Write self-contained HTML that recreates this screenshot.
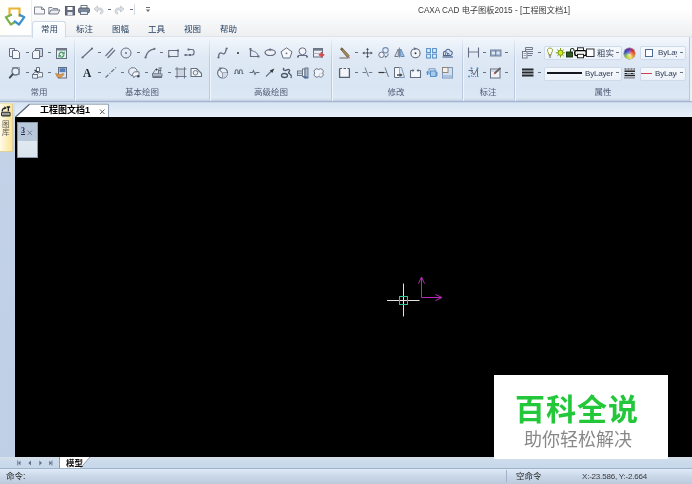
<!DOCTYPE html>
<html><head><meta charset="utf-8">
<style>
*{margin:0;padding:0;box-sizing:border-box}
html,body{width:692px;height:484px;overflow:hidden;background:#000}
body{position:relative;font-family:"Liberation Sans","Noto Sans CJK SC",sans-serif;font-size:8.5px;color:#1e395b}
.abs{position:absolute}
#title{left:0;top:0;width:692px;height:37px;background:linear-gradient(#ffffff 0,#ffffff 9px,#eeeff1 36px)}
#ribbon{left:0;top:36px;width:692px;height:66px;background:linear-gradient(#f3f7fc 0,#dfe9f5 20px,#d9e5f3 50px,#dde8f5 61px,#d3deec 62.5px,#c0cee0 64px);border-top:1px solid #dde4ee;border-bottom:1px solid #a3b5cc}
#rtab{left:32px;top:21px;width:34px;height:16.500px;background:linear-gradient(#fdfeff,#f3f7fc);border:1px solid #d0dae8;border-bottom:none;border-radius:3px 3px 0 0}
.t{position:absolute;white-space:nowrap;line-height:10px;will-change:transform}
.sep{position:absolute;top:39px;height:62px;width:2px;background:linear-gradient(90deg,#bccbdf 0,#bccbdf 1px,#eef4fb 1px);-webkit-mask-image:linear-gradient(rgba(0,0,0,.15),#000 35%);mask-image:linear-gradient(rgba(0,0,0,.15),#000 35%)}
.gl{position:absolute;top:87px;line-height:10px;color:#4f5d75;white-space:nowrap;transform:translateX(-50%);will-change:transform}
#docbar{left:0;top:102px;width:692px;height:15px;background:linear-gradient(#c6d4e6 0,#d9e5f4 1.5px,#e8f0f9 15px)}
#side{left:0;top:102px;width:15px;height:366px;background:linear-gradient(#d5e1f0 0,#c3d2e7 50px,#bfcfe5 100%)}
#canvas{left:15px;top:117px;width:677px;height:340px;background:#000}
#btab{left:0;top:457px;width:692px;height:11px;background:linear-gradient(#d6dfea,#cadaec 50%,#c6d8e9)}
#status{left:0;top:468px;width:692px;height:16px;background:linear-gradient(#deeaf8 0,#c9d6e7 8px,#c3d0e2 12px,#b7c7dc 16px);border-top:1px solid #a0b3c9}
svg{position:absolute;overflow:visible}
.combo{position:absolute;background:linear-gradient(#f5f9fd,#ecf2f9);border:1px solid #cfdbea;border-radius:2px}
.dd{position:absolute;width:3px;height:1px;background:#667186}
</style></head><body>
<div class="abs" id="title"></div>
<div class="abs" style="left:0;top:0;width:32px;height:36px;background:linear-gradient(90deg,#fffef7,#ffffff 40%);border-right:1px solid #eceef2;border-bottom:1px solid #e3e7ed"></div>
<div class="abs" id="ribbon"></div>
<div class="abs" id="rtab"></div>
<div class="abs" id="docbar"></div>
<div class="abs" id="side"></div>
<div class="abs" id="canvas"></div>
<div class="abs" id="btab"></div>
<div class="abs" id="status"></div>

<!-- title text -->
<div class="t" style="left:417.5px;top:6px;color:#3a3a3a;font-size:8.2px">CAXA CAD 电子图板2015 - [工程图文档1]</div>
<!-- ribbon tabs -->
<div class="t" style="left:40.500px;top:24px">常用</div>
<div class="t" style="left:76px;top:24px">标注</div>
<div class="t" style="left:112px;top:24px">图幅</div>
<div class="t" style="left:148px;top:24px">工具</div>
<div class="t" style="left:184px;top:24px">视图</div>
<div class="t" style="left:220px;top:24px">帮助</div>
<!-- ribbon right edge -->
<div class="abs" style="left:689px;top:37px;width:1px;height:64px;background:#b9c8dc"></div>
<div class="abs" style="left:690px;top:37px;width:2px;height:64px;background:#e9f0f8"></div>
<!-- group seps -->
<div class="sep" style="left:74px"></div>
<div class="sep" style="left:209px"></div>
<div class="sep" style="left:331px"></div>
<div class="sep" style="left:462px"></div>
<div class="sep" style="left:514px"></div>
<!-- group labels -->
<div class="gl" style="left:39px">常用</div>
<div class="gl" style="left:142px">基本绘图</div>
<div class="gl" style="left:271px">高级绘图</div>
<div class="gl" style="left:396px">修改</div>
<div class="gl" style="left:488px">标注</div>
<div class="gl" style="left:603px">属性</div>

<!-- doc tab -->
<svg style="left:14px;top:101px" width="100" height="16"><path d="M1.500 16L15.500 3.200H94.500V16Z" fill="#fff"/><path d="M15.500 3.200H94.500V16" fill="none" stroke="#93a1b6" stroke-width="1"/><path d="M1.500 16L15.500 3.200" fill="none" stroke="#566379" stroke-width="1.200"/></svg>
<div class="t" style="left:40px;top:104.500px;font-weight:bold;color:#000;font-size:9px">工程图文档1</div>
<svg style="left:99px;top:108px" width="7" height="7"><path d="M1 1.500L5.500 6M5.500 1.500L1 6" stroke="#5a5f68" stroke-width="1"/></svg>

<!-- side tab -->
<div class="abs" style="left:0;top:103px;width:12.500px;height:49px;background:linear-gradient(90deg,#fffbe8,#fbe495);border:1px solid #e0cf98;border-left:none;border-top-color:#ece2bb"></div>
<svg style="left:1px;top:106.300px" width="9.500" height="10.500" viewBox="0 0 11 11" preserveAspectRatio="none"><path d="M1.200 5.800C1.500 3.200 3 2.200 4.800 2" stroke="#1a1f28" stroke-width="1.400" fill="none"/><path d="M4 0.200L6.500 2L4 3.800Z" fill="#1a1f28"/><path d="M6.500 1H10.500M8.500 1V5.500" stroke="#1a1f28" stroke-width="1.500"/><rect x="0.700" y="6.500" width="9.800" height="3.800" rx="1" fill="#d8d4c0" stroke="#1a1f28" stroke-width="1.200"/><path d="M2 8.400H9" stroke="#555" stroke-width="1"/></svg>
<div class="t" style="left:2.300px;top:121.300px;font-size:7.500px;line-height:7.700px;color:#5a5a5a;width:8px;white-space:normal">图库</div>

<!-- float widget -->
<div class="abs" style="left:16.500px;top:122px;width:21px;height:35.500px;background:linear-gradient(#b9c7da 0,#b9c7da 17.500px,#e0e8f1 17.500px,#dbe4ee 35px);border:1px solid #8b98aa"></div>
<div class="t" style="left:20.500px;top:127px;font-size:8px;color:#1c2a48;font-family:'Liberation Serif',serif;font-weight:bold;border-bottom:1px solid #1c2a48;line-height:7px">3</div>
<svg style="left:27px;top:129.500px" width="6" height="6"><path d="M0.500 0.500L5 5M5 0.500L0.500 5" stroke="#6a7890" stroke-width=".9"/></svg>

<!-- crosshair -->
<svg style="left:380px;top:270px" width="70" height="50">
<path d="M7 30.500H39.500M23.500 13.500V46.500" stroke="#e4e4e4" stroke-width="1" fill="none"/>
<rect x="19.500" y="26.500" width="8" height="8" fill="none" stroke="#2fc890" stroke-width="1"/>
<path d="M41.500 27.500V7.500M41.500 27.500H61.500M38.500 13.500L41.500 7L44.500 13.500M55.500 24.500L62 27.500L55.500 30.500" stroke="#b828b8" stroke-width="1" fill="none"/>
</svg>

<!-- watermark -->
<div class="abs" style="left:494px;top:375px;width:174px;height:84px;background:#fff"></div>
<div class="t" style="left:515px;top:391.500px;font-size:30px;line-height:36px;font-weight:bold;color:#22c73a;letter-spacing:1px">百科全说</div>
<div class="t" style="left:524px;top:428px;font-size:18px;line-height:24px;color:#888">助你轻松解决</div>

<!-- bottom tabs -->
<svg style="left:56px;top:457px" width="40" height="11"><path d="M3.500 0H34L24.500 11H3.500Z" fill="#fff"/><path d="M34 0L24.500 11M3.500 0V11" stroke="#8793a6" stroke-width=".9" fill="none"/></svg>
<svg style="left:15px;top:459px" width="40" height="8"><g fill="#62718b"><path d="M2.300 1.500H3.200V6.500H2.300ZM5.500 1.500V6.500L3.200 4Z"/><path d="M16 1.500V6.500L13.300 4Z"/><path d="M24.300 1.500V6.500L27 4Z"/><path d="M34.200 1.500V6.500L36.500 4ZM36.500 1.500H37.400V6.500H36.500Z"/></g></svg>
<div class="t" style="left:65.500px;top:458px;font-weight:bold;color:#111;font-size:8.500px">模型</div>

<!-- status -->
<div class="t" style="left:6px;top:471px;color:#222">命令:</div>
<div class="abs" style="left:506px;top:470px;width:1px;height:12px;background:#9fb0c8"></div>
<div class="t" style="left:516px;top:471px;color:#222">空命令</div>
<div class="t" style="left:582px;top:472px;color:#3a3a3a;font-size:8px;letter-spacing:-0.2px">X:-23.586, Y:-2.664</div>
<svg style="left:0px;top:0px" width="32" height="36">
<path d="M9.5 16V8.5H19.5V17" stroke="#e9b535" stroke-width="2.2" fill="none"/>
<path d="M12 14.500L5.800 17.200L10.800 24.500L15.500 21.800" stroke="#7bb04a" stroke-width="2.2" fill="none" stroke-linejoin="round"/>
<path d="M19 14.500L24.300 17.200L19 24.500L14 20.800" stroke="#3d8fd0" stroke-width="2.2" fill="none" stroke-linejoin="round"/>
<path d="M14.5 13L11 17.5H13.5V20H15.5V17.5H18Z" fill="#fff" opacity=".9"/>
</svg>
<svg style="left:34px;top:6px;opacity:0.85" width="12" height="9"><path d="M0.500 1H7.500L10.500 3.500V8H0.500Z" fill="#f4f6f9" stroke="#5a6476" stroke-width=".9"/><path d="M7.500 1V3.500H10.500" stroke="#5a6476" stroke-width=".9" fill="none"/></svg>
<svg style="left:48px;top:6px;opacity:0.85" width="13" height="9"><path d="M0.800 8V1.500H4L5 2.500H9.500V4" stroke="#5a6476" stroke-width=".9" fill="#eef0f3"/><path d="M0.800 8L3 4H12L9.800 8Z" fill="#e9eaec" stroke="#4a5468" stroke-width=".9"/></svg>
<svg style="left:64.5px;top:5.5px;opacity:0.85" width="11" height="10"><rect x="0.5" y="0.5" width="9" height="8.500" fill="#4a5568" stroke="#2f3745" stroke-width=".9"/><rect x="2.5" y="1" width="5" height="3" fill="#fff"/><rect x="2.5" y="6" width="5" height="3" fill="#dfe5ee"/></svg>
<svg style="left:78px;top:5px;opacity:0.85" width="13" height="10"><rect x="3" y="0.500" width="6" height="3" fill="#fff" stroke="#4a5468" stroke-width=".9"/><rect x="0.500" y="3" width="11" height="4.800" rx="1.500" fill="#66758c" stroke="#2f3745" stroke-width=".9"/><rect x="2.500" y="6.300" width="7" height="3.200" fill="#dcebf6" stroke="#4a5468" stroke-width=".9"/></svg>
<svg style="left:93px;top:5px;opacity:0.85" width="12" height="10"><path d="M1 4L4.5 1V3H7C9 3 10 4.5 10 6.5C10 8 9 9 7.5 9V7.2C8.2 7 8.5 6.7 8.5 6C8.5 5.4 8 5 7 5H4.5V7Z" fill="#d9dde3" stroke="#b3b9c3" stroke-width=".8"/></svg>
<div class="dd" style="left:108px;top:9px"></div>
<svg style="left:114px;top:5px;opacity:0.85" width="12" height="10"><path d="M10 4L6.5 1V3H4C2 3 1 4.5 1 6.5C1 8 2 9 3.5 9V7.2C2.8 7 2.5 6.7 2.5 6C2.5 5.4 3 5 4 5H6.5V7Z" fill="#d9dde3" stroke="#b3b9c3" stroke-width=".8"/></svg>
<div class="dd" style="left:130px;top:9px"></div>
<div class="abs" style="left:134px;top:4px;width:1px;height:11px;background:#d5dbe4"></div>
<svg style="left:145px;top:6px;opacity:0.85" width="6" height="8"><path d="M1 1.5H5" stroke="#555" stroke-width="1"/><path d="M0.8 3.5H5.2L3 6Z" fill="#555"/></svg>
<svg style="left:9px;top:48px;opacity:0.82" width="12" height="11"><path d="M0.5 0.5H5.5V8.5H0.5Z" fill="#f4f6fa" stroke="#4a5468"  stroke-width="1"/><path d="M3.5 2.5H8.5L10.5 4.5V10.5H3.5Z" fill="#fbfcfe" stroke="#4a5468"/></svg>
<div class="dd" style="left:26px;top:52px"></div>
<svg style="left:32px;top:48px;opacity:0.82" width="12" height="11"><path d="M3.5 0.5H10.5V8.5H3.5Z" fill="#c9d0db" stroke="#4a5468"/><path d="M0.5 4.5L2.5 2.5H7.5V10.5H0.5Z" fill="#f4f6fa" stroke="#4a5468"/></svg>
<div class="dd" style="left:48px;top:52px"></div>
<svg style="left:56px;top:48px;opacity:0.82" width="12" height="11"><rect x="0.5" y="0.5" width="10" height="10" fill="#e9f3ea" stroke="#4a5468"/><rect x="0.5" y="0.5" width="10" height="2" fill="#5a6374"/><path d="M3.300 6.800A2.300 2.300 0 0 1 7.200 4.800" stroke="#2a8a48" stroke-width="1.300" fill="none"/><path d="M8.700 3.300V6.300H5.700Z" fill="#2a8a48"/><path d="M7.800 6.500A2.300 2.300 0 0 1 3.900 8.400" stroke="#2a8a48" stroke-width="1.300" fill="none"/><path d="M2.400 9.900V6.900H5.400Z" fill="#2a8a48"/></svg>
<svg style="left:9px;top:67px;opacity:0.82" width="12" height="12"><rect x="3.5" y="0.5" width="7" height="7" fill="none" stroke="#8a94a6"/><circle cx="6.5" cy="4.5" r="3.6" fill="#eef3f9" fill-opacity=".7" stroke="#4a5468" stroke-width="1.1"/><path d="M3.8 7.2L0.8 10.6" stroke="#222b38" stroke-width="2" stroke-linecap="round"/></svg>
<div class="dd" style="left:26px;top:72px"></div>
<svg style="left:32px;top:67px;opacity:0.82" width="12" height="12"><path d="M4.5 0.5H7.5V4.5H4.5Z" fill="#fff" stroke="#4a5468"/><path d="M0.500 7.5L3 5H8L5.5 7.5Z M0.5 7.5H5.5V11.200H0.5Z M5.500 7.5L8 5V9L5.500 11.200" fill="#f2f5f9" stroke="#4a5468" stroke-width=".9"/><path d="M6.5 5.500H10.500V10H7" fill="#f6f8fb" stroke="#4a5468" stroke-width=".9"/><path d="M2.500 3L6 5.500" stroke="#111" stroke-width="1.300"/></svg>
<div class="dd" style="left:48px;top:72px"></div>
<svg style="left:55px;top:67px;opacity:0.82" width="13" height="12"><rect x="3.5" y="0.5" width="8" height="10.500" fill="#dfe8f4" stroke="#4a5468"/><rect x="4.5" y="1.200" width="6" height="4" fill="#3568b0"/><path d="M0.5 6.500C2 6.500 3.500 7.500 5 7.500L8.500 6.500L9 7.500L6 10.500L2.500 10.500Z" fill="#d98a2b" stroke="#9a5a18" stroke-width=".6"/></svg>
<svg style="left:81px;top:47px;opacity:0.82" width="13" height="12"><path d="M1.500 10.500L11 1.500" stroke="#4a5468" stroke-width="1.200"/><circle cx="1.500" cy="10.500" r="1.100" fill="#4a5468"/><circle cx="11" cy="1.500" r="1.100" fill="#4a5468"/></svg>
<div class="dd" style="left:98px;top:52px"></div>
<svg style="left:105px;top:47px;opacity:0.82" width="11" height="12"><path d="M0.500 9L8 1M2.500 11L10 3" stroke="#4a5468" stroke-width="1.100"/></svg>
<svg style="left:120px;top:47px;opacity:0.82" width="12" height="12"><circle cx="6" cy="6" r="5" stroke="#4a5468" fill="none" stroke-width="1"/><circle cx="6" cy="6" r="1" fill="#4a5468"/></svg>
<div class="dd" style="left:137px;top:52px"></div>
<svg style="left:144px;top:47px;opacity:0.82" width="12" height="12"><path d="M1.500 10.500C2.500 6 5.500 2.500 10.500 1.800" stroke="#4a5468" stroke-width="1.200" fill="none"/><circle cx="1.500" cy="10.500" r="1.100" fill="#4a5468"/><circle cx="10.500" cy="1.800" r="1.100" fill="#4a5468"/></svg>
<div class="dd" style="left:160px;top:52px"></div>
<svg style="left:168px;top:49px;opacity:0.82" width="12" height="9"><rect x="0.700" y="1.500" width="9.300" height="6" fill="#e9eef6" stroke="#4a5468"  stroke-width="1"/><rect x="9" y="0.500" width="2" height="2" fill="#4a5468"/><rect x="0" y="6.500" width="2" height="2" fill="#4a5468"/></svg>
<svg style="left:184px;top:48px;opacity:0.82" width="12" height="9"><path d="M4.500 1.500H8C10.800 1.500 10.800 7 8 7H1.500" stroke="#4a5468" stroke-width="1.200" fill="none"/><rect x="3.500" y="0.500" width="2" height="2" fill="#4a5468"/><rect x="0.500" y="6" width="2" height="2" fill="#4a5468"/><rect x="5" y="6" width="2" height="2" fill="#4a5468"/></svg>
<div class="t" style="left:83.300px;top:66px;font-family:'Liberation Serif',serif;font-weight:bold;font-size:11.500px;line-height:14px;color:#1c222c">A</div>
<div class="dd" style="left:98px;top:72px"></div>
<svg style="left:105px;top:67px;opacity:0.82" width="12" height="12"><path d="M0.500 10.500L11 0.500" stroke="#4a5468" stroke-width="1.100" stroke-dasharray="4 1.500 1 1.500"/></svg>
<div class="dd" style="left:121px;top:72px"></div>
<svg style="left:128px;top:67px;opacity:0.82" width="12" height="12"><path d="M3 0.800H6.800L9 3V5.500H6L4 9L0.800 6.200V3Z" fill="#eef1f6" stroke="#4a5468" stroke-width=".9"/><path d="M4.300 7.300L6.500 4.800H11V9H7.200L5.800 10.800Z" fill="#f6f8fb" stroke="#4a5468" stroke-width=".9"/><circle cx="10.300" cy="9.300" r="1.200" fill="#1c222c"/></svg>
<div class="dd" style="left:145px;top:72px"></div>
<svg style="left:152px;top:67px;opacity:0.82" width="11" height="12"><path d="M0.500 7L3.500 2.500H6.500V7Z" fill="#dfe4ec" stroke="#4a5468" stroke-width=".9"/><path d="M3.500 2.500L5 1L5 4Z" fill="#111"/><path d="M6.500 1H10M8.200 1V7M7 3.500H9.500" stroke="#4a5468" stroke-width="1"/><rect x="0.500" y="7" width="9.500" height="2" fill="#f2f4f8" stroke="#4a5468" stroke-width=".9"/><rect x="0.500" y="9.200" width="9.500" height="1.800" fill="#4b5567"/></svg>
<div class="dd" style="left:168px;top:72px"></div>
<svg style="left:175px;top:67px;opacity:0.82" width="11" height="12"><rect x="2" y="2" width="7.500" height="7.500" fill="#cdd2db"/><path d="M0 2H11.500M0 9.500H11.500M2 0V11.500M9.500 0V11.500" stroke="#4a5468" stroke-width=".9"/></svg>
<svg style="left:190px;top:67px;opacity:0.82" width="13" height="11"><path d="M1 1.500H6.500L11.500 6.500V9.500H1Z" fill="#fbfcfe" stroke="#4a5468" stroke-width="1.100" stroke-linejoin="round"/><circle cx="5.500" cy="5.800" r="2.300" fill="#eef2f7" stroke="#4a5468" stroke-width=".9"/></svg>
<svg style="left:217px;top:47px;opacity:0.82" width="12" height="12"><path d="M1.500 10.500C1.500 5 4 5.500 5.500 6.500C8 8 8.500 5 9.500 1.500" stroke="#4a5468" stroke-width="1.300" fill="none"/><circle cx="1.500" cy="10.500" r="1.100" fill="#4a5468"/><circle cx="9.700" cy="1.500" r="1.100" fill="#4a5468"/></svg>
<div class="abs" style="left:236.500px;top:51.500px;width:2.500px;height:2.500px;border-radius:50%;background:#222b38"></div>
<svg style="left:249px;top:48px;opacity:0.82" width="11" height="10"><path d="M1.500 0.500V8.500H10" stroke="#4a5468" stroke-width="1.200" fill="none"/><path d="M1.500 2.500C6 3 8.800 5 9.200 8.500" stroke="#4a5468" stroke-width="1" fill="none"/><rect x="0.500" y="0" width="2" height="2" fill="#4a5468"/><rect x="8.500" y="7.500" width="2" height="2" fill="#4a5468"/></svg>
<svg style="left:264px;top:48px;opacity:0.82" width="13" height="9"><ellipse cx="6.200" cy="4.600" rx="5.200" ry="2.900" fill="#f2f5fa" stroke="#4a5468" stroke-width="1.200"/><rect x="5.200" y="0.600" width="2" height="2" fill="#4a5468"/></svg>
<svg style="left:280px;top:47px;opacity:0.82" width="13" height="12"><path d="M6.500 0.800L12 4.800L9.900 11H3.100L1 4.800Z" fill="#fbfcfe" stroke="#4a5468" stroke-width="1" stroke-linejoin="round"/><circle cx="6.500" cy="6.300" r=".9" fill="#4a5468"/></svg>
<svg style="left:297px;top:47px;opacity:0.82" width="12" height="12"><circle cx="5.500" cy="4.300" r="3.500" fill="#f4f7fb" stroke="#4a5468" stroke-width="1"/><path d="M1 11V8.500H10V11" stroke="#4a5468" stroke-width="1" fill="none"/><path d="M0 9.500H2M9 9.500H11" stroke="#4a5468" stroke-width="1.200"/></svg>
<svg style="left:313px;top:48px;opacity:0.82" width="12" height="10"><rect x="0.500" y="0.500" width="9" height="8.500" fill="#eef1f6" stroke="#4a5468"/><rect x="0.500" y="0.500" width="9" height="2.200" fill="#5a6374"/><path d="M0.500 5.500H9.500" stroke="#8a94a6" stroke-width=".8"/><path d="M8.500 4V9.500M5.800 6.800H11.200" stroke="#e02020" stroke-width="1.800"/></svg>
<svg style="left:217px;top:67px;opacity:0.82" width="12" height="12"><circle cx="5.600" cy="6" r="5" fill="#eef2f7" stroke="#4a5468" stroke-width="1.100"/><path d="M5.600 6V11M5.600 6H10.600M5.600 6L2 2.500" stroke="#4a5468" stroke-width="1"/><path d="M5.600 6H10.600A5 5 0 0 1 5.600 11Z" fill="#cfd6e1"/><path d="M2.200 0.300L5.500 1L3 3.300Z" fill="#4a5468"/></svg>
<svg style="left:234px;top:69px;opacity:0.82" width="10" height="6"><path d="M0 4.500H1.200V2.500C1.200 0.200 4 0.200 4 2.500V4.500H5.400V2.500C5.400 0.200 8.200 0.200 8.200 2.500V4.500H9.400" stroke="#4a5468" stroke-width="1.100" fill="none"/></svg>
<svg style="left:249px;top:68px;opacity:0.82" width="11" height="9"><path d="M0.500 4.500H3.500L4.500 2.500L6 6.500L7 4.500H10.500" stroke="#4a5468" stroke-width="1.100" fill="none"/></svg>
<svg style="left:265px;top:68px;opacity:0.82" width="10" height="10"><path d="M1 8.500L7 2.500" stroke="#4a5468" stroke-width="1.100"/><path d="M9.300 0.500L4.800 2.600L7.300 5Z" fill="#111"/></svg>
<svg style="left:281px;top:67px;opacity:0.82" width="12" height="12"><path d="M3 1C1 3 4 4 5.500 3.200C8 1.500 9.500 3 8 4.800C6.500 6.500 10 6.500 10.500 9.500" stroke="#2f3948" stroke-width="1.400" fill="none"/><ellipse cx="3.500" cy="8.500" rx="3" ry="2" fill="none" stroke="#2f3948" stroke-width="1.300"/><path d="M8.800 10.500L11 9L10.800 11.200Z" fill="#4a5468"/></svg>
<svg style="left:297px;top:68px;opacity:0.82" width="12" height="11"><rect x="0.500" y="3" width="5" height="4.500" fill="#d6dde8" stroke="#4a5468" stroke-width=".9"/><path d="M0.500 5.200H5.500" stroke="#4a5468" stroke-width=".8"/><rect x="5.500" y="1" width="2.500" height="7.500" fill="#f2f5f9" stroke="#4a5468" stroke-width=".9"/><rect x="8" y="0" width="3" height="10" fill="#9fb4cf" stroke="#4a5468" stroke-width=".9"/><path d="M5.500 8.500H10.500V10.200H7Z" fill="#2d4f86"/></svg>
<svg style="left:312.8px;top:67.5px;opacity:0.82" width="12" height="11"><path d="M5.700 1.530A2.700 2.600 0 0 1 9.700 5A2.700 2.600 0 0 1 5.700 8.470A2.700 2.600 0 0 1 1.700 5A2.700 2.600 0 0 1 5.700 1.530Z" fill="#f6f8fb" stroke="#4a5468" stroke-width=".9"/><circle cx="7.800" cy="7" r="1.600" fill="#fff" stroke="#9aa4b4" stroke-width=".5"/></svg>
<svg style="left:339px;top:47px;opacity:0.82" width="12" height="12"><path d="M1.500 2L3 0.800L10 8.500L9.500 10.200L7.800 9.800Z" fill="#96733a" stroke="#5a4420" stroke-width=".9"/><path d="M1.500 2L3 0.800L4.300 2.200L2.800 3.500Z" fill="#5b4a2a"/><path d="M0.500 11H9" stroke="#5a4a3a" stroke-width="1"/><path d="M8.500 10.800H11" stroke="#c05050" stroke-width="1"/></svg>
<div class="dd" style="left:355px;top:52px"></div>
<svg style="left:361px;top:47px;opacity:0.82" width="13" height="12"><path d="M6.500 2V10M2.500 6H10.500" stroke="#4a5468" stroke-width="1"/><path d="M6.500 0.800L8 3H5ZM6.500 11.200L8 9H5ZM1.200 6L3.500 4.500V7.500ZM11.800 6L9.500 4.500V7.500Z" fill="#2a3342"/><circle cx="6.500" cy="6" r="1" fill="#2a3342"/></svg>
<svg style="left:378px;top:47px;opacity:0.82" width="12" height="12"><circle cx="3.500" cy="7.800" r="2.700" fill="#f4f7fb" stroke="#4a5468" stroke-width="1"/><circle cx="7.500" cy="3.300" r="2.700" fill="none" stroke="#5878a4" stroke-width="1.100"/><path d="M10 6.500C10.500 8.500 9.500 9.500 7.500 9.800" stroke="#4a5468" stroke-width="1" fill="none"/><path d="M6.800 8.500L8.800 9.800L7 11Z" fill="#4a5468"/></svg>
<svg style="left:394px;top:47px;opacity:0.82" width="12" height="11"><path d="M4.300 2V9.500H0.800Z" fill="#e8ecf2" stroke="#4a5468" stroke-width=".9"/><path d="M6.700 2V9.500H10.200Z" fill="#8fc0e8" stroke="#3a6ea8" stroke-width=".9"/><path d="M5.500 0.500V10.500" stroke="#4a5468" stroke-width=".8"/></svg>
<svg style="left:410px;top:47px;opacity:0.82" width="12" height="12"><circle cx="5.500" cy="6.200" r="4.600" fill="#f6f8fb" stroke="#4a5468" stroke-width="1.100"/><circle cx="5.500" cy="6.200" r="1" fill="#111"/><path d="M3.800 0.200L6.800 1.500L4.300 3.300Z" fill="#4a5468"/></svg>
<svg style="left:426px;top:48px;opacity:0.82" width="12" height="11"><g fill="#eaf3fb" stroke="#3a7fc0" stroke-width="1.100"><rect x="0.600" y="0.600" width="3.800" height="3.800"/><rect x="6.600" y="0.600" width="3.800" height="3.800"/><rect x="0.600" y="6.200" width="3.800" height="3.800"/><rect x="6.600" y="6.200" width="3.800" height="3.800"/></g></svg>
<svg style="left:442px;top:48px;opacity:0.82" width="12" height="10"><path d="M1.500 7.500V5C1.500 3.500 3 3 3.800 3.500C4 0.800 7.500 0.500 8.200 3C10 3 10.800 4.500 10 6C9.500 7 9 7.500 8.500 7.500Z" fill="#dbe8f6" stroke="#2d4a78" stroke-width="1.100"/><path d="M3.500 7.500V4.800H5.500V7.500M5.500 5.500H7V7.500" stroke="#2d4a78" stroke-width=".8" fill="none"/><path d="M0.500 9H11" stroke="#2d4a78" stroke-width="1.200"/></svg>
<svg style="left:339px;top:67px;opacity:0.82" width="12" height="12"><path d="M0.600 1.500V10.400H10.400V1.500" fill="#f8fafc" stroke="#3a4456" stroke-width="1.300"/><path d="M0.500 1.500H10.500" stroke="#3a4456" stroke-width="1.200" stroke-dasharray="2.500 1.500"/></svg>
<div class="dd" style="left:355px;top:72px"></div>
<svg style="left:362px;top:67px;opacity:0.82" width="12" height="11"><path d="M0.500 5.500H5M6.800 5.500H11" stroke="#4a5468" stroke-width=".9" stroke-dasharray="3.500 1"/><path d="M3 0.500L6.500 9.500" stroke="#4a5468" stroke-width=".9"/></svg>
<svg style="left:378px;top:67px;opacity:0.82" width="12" height="11"><path d="M0.500 5.500H6" stroke="#111" stroke-width="1.200"/><path d="M6 5.500H8.500" stroke="#4a5468" stroke-width=".8"/><path d="M7 0.500L10.500 10" stroke="#4a5468" stroke-width=".9"/></svg>
<svg style="left:394px;top:67px;opacity:0.82" width="12" height="12"><path d="M0.500 0.500H5.500V10.500H0.500Z" fill="#fbfcfe" stroke="#4a5468" stroke-width="1"/><path d="M5.500 0.500H7.500L10.500 10.500H5.500" fill="#dfeaf6" stroke="#5a7ea8" stroke-width=".9"/><path d="M3 8H7" stroke="#111" stroke-width="1.300"/><path d="M8.500 8L6.300 6.300V9.700Z" fill="#111"/></svg>
<svg style="left:410px;top:68px;opacity:0.82" width="12" height="10"><path d="M0.500 2.500V9.500H10.500V2.500" fill="#fbfcfe" stroke="#4a5468" stroke-width="1.100"/><path d="M0.500 2.500H3M8 2.500H10.500" stroke="#4a5468" stroke-width="1.100"/><path d="M2.500 0.800L4.500 2.500L2.500 4.200ZM8.500 0.800L6.500 2.500L8.500 4.200Z" fill="#4a5468"/></svg>
<svg style="left:426px;top:68px;opacity:0.82" width="12" height="10"><rect x="3" y="0.800" width="6" height="5" fill="none" stroke="#5a7ea8" stroke-width=".9"/><rect x="4.500" y="3" width="5.500" height="5.500" fill="#9cc4ea" stroke="#3a7fc0" stroke-width="1"/><path d="M1.500 3V7M10.800 4V8" stroke="#3a7fc0" stroke-width="1.300"/><path d="M0.500 4.500L2.500 4.500" stroke="#3a7fc0" stroke-width="1"/></svg>
<svg style="left:442px;top:67px;opacity:0.82" width="12" height="12"><rect x="0.500" y="0.500" width="10" height="10.500" fill="#cfe0f1" stroke="#6b88ad" stroke-width="1"/><rect x="0.500" y="0.500" width="5.500" height="5" fill="#fbf3ea" stroke="#7a6a5a" stroke-width=".9"/><path d="M0.500 9H10.500" stroke="#8fb0d4" stroke-width="1.500"/></svg>
<svg style="left:468px;top:47px;opacity:0.82" width="12" height="12"><path d="M0.500 0.500V10.500M10.500 0.500V10.500" stroke="#4a5468" stroke-width="1.100"/><path d="M0.500 5H10.500" stroke="#4a5468" stroke-width=".9"/></svg>
<div class="dd" style="left:483px;top:52px"></div>
<svg style="left:490px;top:49px;opacity:0.82" width="12" height="8"><rect x="0.500" y="1" width="10.500" height="6" fill="#8ea3c0" stroke="#5a6f90" stroke-width="1"/><rect x="2" y="2.800" width="3" height="2.500" fill="#dfe8f4"/><rect x="6.500" y="2.800" width="3" height="2.500" fill="#dfe8f4"/><path d="M5.700 1V7" stroke="#4a5a78" stroke-width=".8"/></svg>
<div class="dd" style="left:505px;top:52px"></div>
<svg style="left:468px;top:67px;opacity:0.82" width="12" height="12"><path d="M3.500 1V9.500H10.500" stroke="#3a7fc0" stroke-width="1.200" stroke-dasharray="1.200 1.200" fill="none"/><path d="M0.500 3.500H5M3.500 3.500L6 8L9.500 1.500V9.500" stroke="#4a5468" stroke-width="1" fill="none"/><circle cx="3.500" cy="1.200" r="1" fill="#3a7fc0"/><circle cx="9.500" cy="1.200" r="1" fill="#3a7fc0"/><circle cx="1" cy="9.500" r="1" fill="#3a7fc0"/></svg>
<div class="dd" style="left:483px;top:72px"></div>
<svg style="left:490px;top:67px;opacity:0.82" width="12" height="12"><rect x="0.500" y="2" width="9.500" height="9" fill="#f4f6f9" stroke="#4a5468" stroke-width="1"/><path d="M0.500 4H10" stroke="#9aa4b4" stroke-width=".8"/><path d="M4.500 6.500L10.500 0.800" stroke="#4a4040" stroke-width="1.800"/><path d="M3.500 7.500L5.500 6.800L4.300 5.600Z" fill="#c33"/></svg>
<div class="dd" style="left:505px;top:72px"></div>
<svg style="left:522px;top:47px;opacity:0.82" width="12" height="12"><path d="M3.500 0.500H10.500V2.500H3.500ZM3.500 2.500V4.500M5.500 4.500H11M5.500 6.500H11M5.500 8.500H10" stroke="#4a5468" stroke-width=".9" fill="#e8edf4"/><rect x="0.500" y="4.500" width="4.500" height="6.500" fill="#f2f5f9" stroke="#4a5468" stroke-width=".9"/><path d="M1.500 6.500H4M1.500 8.500H4" stroke="#7a8497" stroke-width=".8"/></svg>
<div class="dd" style="left:538px;top:52px"></div>
<svg style="left:522px;top:68px;opacity:0.82" width="12" height="9"><path d="M0 1.500H11.500M0 4.500H11.500M0 7.500H11.500" stroke="#000" stroke-width="1.900"/></svg>
<div class="dd" style="left:538px;top:72px"></div>
<div class="combo" style="left:544px;top:46px;width:78px;height:14px"></div>
<div class="combo" style="left:544px;top:66.500px;width:78px;height:14px"></div>
<div class="combo" style="left:640px;top:46px;width:46px;height:14px"></div>
<div class="combo" style="left:640px;top:66.500px;width:46px;height:14px"></div>
<svg style="left:546px;top:47px" width="50" height="12">
<path d="M4 1C1.800 1 1 2.800 1.600 4.300C2.200 5.500 2.800 6 2.800 7.500H5.200C5.200 6 5.800 5.500 6.400 4.300C7 2.800 6.200 1 4 1Z" fill="#fbfde8" stroke="#8a9a30" stroke-width=".9"/><path d="M2.800 8.800H5.200M3.200 10.200H4.800" stroke="#555" stroke-width=".9"/>
<g stroke="#7a9a10" stroke-width=".9"><path d="M14.500 1V10.500M9.800 5.800H19.200M11.200 2.500L17.800 9M17.800 2.500L11.200 9"/></g><circle cx="14.500" cy="5.800" r="2.500" fill="#d8f020" stroke="#6a8a10" stroke-width=".9"/>
<rect x="20.500" y="5" width="6" height="5" fill="#2f5522" stroke="#18300f" stroke-width=".9"/><path d="M24.500 5V3C24.500 1 28 1 28 3V4" stroke="#1f2a18" stroke-width="1.100" fill="none"/>
<rect x="31.500" y="0.800" width="6" height="3" fill="#fff" stroke="#111" stroke-width=".9"/><rect x="28.800" y="3.600" width="11.400" height="5" rx="1.500" fill="#f4f4f4" stroke="#000" stroke-width="1.400"/><rect x="31.500" y="7.300" width="6" height="3.500" fill="#fff" stroke="#111" stroke-width=".9"/>
<rect x="40.500" y="2" width="7.500" height="7.500" fill="#fff" stroke="#2a2f38" stroke-width="1"/>
</svg>
<div class="t" style="left:597px;top:48px;color:#36425a;font-size:8.500px">粗实</div>
<div class="dd" style="left:616px;top:52px"></div>
<div class="abs" style="left:547px;top:72.200px;width:35px;height:1.800px;background:#15181e"></div>
<div class="t" style="left:585px;top:68.500px;color:#36425a;font-size:8px;letter-spacing:-0.2px">ByLayer</div>
<div class="dd" style="left:616px;top:72px"></div>
<div class="abs" style="left:624px;top:47.700px;width:11px;height:11px;border-radius:50%;background:radial-gradient(circle at 50% 55%,rgba(255,255,255,.55) 0,rgba(255,255,255,0) 55%),conic-gradient(from 0deg,#8030a0 0deg,#d03030 50deg,#e86a20 105deg,#f0e050 165deg,#98c840 230deg,#3050c0 285deg,#4838b8 335deg,#8030a0 360deg);box-shadow:0 0 0 .5px #8a7a6a"></div>
<svg style="left:624px;top:68px" width="12" height="11"><path d="M0.500 1H11" stroke="#222" stroke-width="1.200" stroke-dasharray="2 1"/><path d="M0.500 3.200H11" stroke="#222" stroke-width="1.500"/><path d="M0.500 5.500H11" stroke="#222" stroke-width="1" stroke-dasharray="3 1 1 1"/><path d="M0.500 7.500H11" stroke="#222" stroke-width="1.500"/><path d="M0.500 9.800H11" stroke="#222" stroke-width="1.200" stroke-dasharray="1 1"/></svg>
<div class="abs" style="left:645px;top:49px;width:8px;height:8px;background:#fff;border:1px solid #4a6a9a"></div>
<div class="t" style="left:657.500px;top:48px;color:#36425a;font-size:8px;letter-spacing:-0.2px;width:18.500px;overflow:hidden">ByLayer</div>
<div class="dd" style="left:680px;top:52px"></div>
<div class="abs" style="left:641px;top:73px;width:10.500px;height:1px;background:#d04050"></div>
<div class="t" style="left:654.500px;top:68.500px;color:#36425a;font-size:8px;letter-spacing:-0.2px;width:21.500px;overflow:hidden">ByLayer</div>
<div class="dd" style="left:680px;top:72px"></div>
</body></html>
